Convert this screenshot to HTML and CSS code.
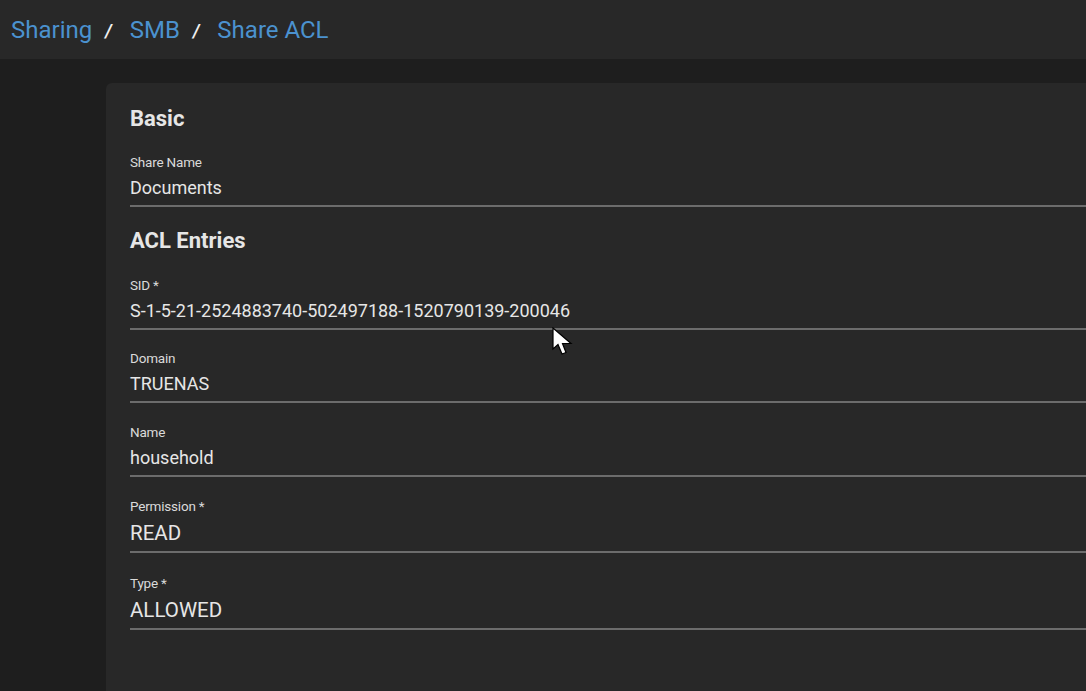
FILE: index.html
```html
<!DOCTYPE html>
<html lang="en">
<head>
<meta charset="utf-8">
<title>Share ACL</title>
<link rel="stylesheet" href="styles.css">
</head>
<body>
<header class="topbar">
  <nav class="crumbs">
    <a class="crumb">Sharing</a>
    <span class="sep">/</span>
    <a class="crumb">SMB</a>
    <span class="sep">/</span>
    <a class="crumb">Share ACL</a>
  </nav>
</header>
<main class="main">
  <section class="card">
    <h2 class="section-title">Basic</h2>
    <div class="field">
      <div class="label">Share Name</div>
      <div class="value">Documents</div>
    </div>
    <h2 class="section-title section-title--spaced">ACL Entries</h2>
    <div class="field field--first">
      <div class="label">SID *</div>
      <div class="value">S-1-5-21-2524883740-502497188-1520790139-200046</div>
    </div>
    <div class="field field--tight">
      <div class="label">Domain</div>
      <div class="value">TRUENAS</div>
    </div>
    <div class="field">
      <div class="label">Name</div>
      <div class="value">household</div>
    </div>
    <div class="field field--select">
      <div class="label">Permission *</div>
      <div class="value value--select">READ</div>
    </div>
    <div class="field field--select field--loose">
      <div class="label">Type *</div>
      <div class="value value--select">ALLOWED</div>
    </div>
  </section>
</main>
<svg class="cursor" width="21" height="29" viewBox="0 0 21 29">
  <path d="M1 1 L1 22 L6 17.5 L10 27 L14 25.5 L10.5 16.5 L19 16.5 Z" fill="#ffffff" stroke="#000000" stroke-width="1.2" stroke-linejoin="miter"/>
</svg>
</body>
</html>
```

FILE: styles.css
```css
html, body {
  margin: 0;
  padding: 0;
  height: 100%;
}
body {
  background: #1e1e1e;
  font-family: Roboto, "Liberation Sans", sans-serif;
  color: #e3e3e3;
  overflow: hidden;
  position: relative;
}
.topbar {
  height: 59px;
  background: #282828;
  display: flex;
  align-items: center;
  padding-left: 11px;
  box-sizing: border-box;
}
.crumbs {
  display: flex;
  align-items: center;
  font-size: 24px;
  line-height: 28px;
}
.crumb {
  color: #4b92cf;
  text-decoration: none;
}
.sep {
  color: #f0f0f0;
  font-size: 18px;
  font-weight: 700;
  font-style: italic;
  margin: 0 18px 0 13px;
  position: relative;
  top: 1px;
}
.main {
  padding: 24px 0 0 106px;
  overflow: hidden;
}
.card {
  background: #282828;
  border-radius: 6px 0 0 0;
  margin-right: -20px;
  padding: 22px 0 80px 24px;
  min-height: 620px;
  box-sizing: border-box;
}
.section-title {
  margin: 0;
  font-size: 22px;
  line-height: 28px;
  font-weight: 700;
  color: #e6e6e6;
}
.section-title--spaced {
  margin-top: 20px;
}
.field {
  margin-top: 21px;
  border-bottom: 2px solid #6c6c6c;
  padding-bottom: 5px;
}
.field--first {
  margin-top: 22px;
}
.field--tight {
  margin-top: 20px;
}
.field--loose {
  margin-top: 22px;
}
.label {
  font-size: 13.5px;
  line-height: 16px;
  color: #dadada;
  letter-spacing: -0.2px;
}
.value {
  margin-top: 6px;
  font-size: 18px;
  line-height: 24px;
  color: #e6e6e6;
}
.value--select {
  font-size: 20.5px;
  line-height: 26px;
}
.cursor {
  position: absolute;
  left: 552px;
  top: 327px;
}
```
